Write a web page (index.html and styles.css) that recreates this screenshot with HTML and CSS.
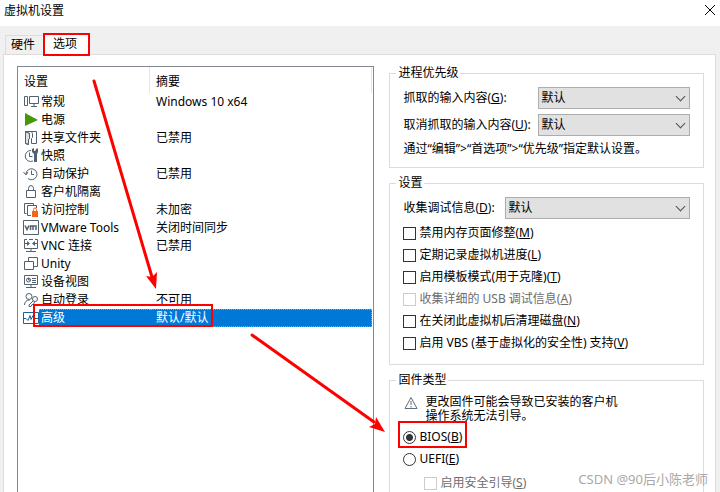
FILE: index.html
```
<!DOCTYPE html>
<html lang="zh-CN">
<head>
  <meta charset="UTF-8">
  <meta name="viewport" content="width=device-width, initial-scale=1.0">
  <title>虚拟机设置</title>
  <link rel="stylesheet" href="styles.css">
</head>
<body>

  <header class="titlebar">
    <span>虚拟机设置</span>
    <button class="close" aria-label="关闭">
      <svg width="12" height="12" viewBox="0 0 12 12"><path d="M1 1l10 10M11 1L1 11" stroke="#000" fill="none"/></svg>
    </button>
  </header>

  <nav class="tabs">
    <button class="tab">硬件</button>
    <button class="tab active">选项</button>
  </nav>

  <main class="panel">

    <!-- Options list -->
    <section class="list">
      <table>
        <colgroup>
          <col class="col-icon">
          <col class="col-name">
          <col>
        </colgroup>
        <thead>
          <tr><th colspan="2">设置</th><th>摘要</th></tr>
        </thead>
        <tbody>
          <tr>
            <td class="icon"><svg class="ico" viewBox="0 0 16 16"><path d="M1.5 2.500h3v9h-3zM6.500 2.500h9v7h-9zM11 9.500v3M8 12.500h6"/></svg></td>
            <td>常规</td><td>Windows 10 x64</td>
          </tr>
          <tr>
            <td class="icon"><svg class="ico" viewBox="0 0 16 16"><path class="play" d="M2 1l13 7-13 6z"/></svg></td>
            <td>电源</td><td></td>
          </tr>
          <tr>
            <td class="icon"><svg class="ico" viewBox="0 0 16 16"><path class="shade" d="M2.500 1.500l4 2v5l-1 1v5l-3-1z"/><path d="M2.500 1.500h11v12h-5v-5l1-1v-4l-1-2M2.500 1.500l4 2v5l-1 1v5l-3-1z"/></svg></td>
            <td>共享文件夹</td><td>已禁用</td>
          </tr>
          <tr>
            <td class="icon"><svg class="ico" viewBox="0 0 16 16"><path d="M8 2.500a5.500 5.500 0 1 0 2 10.500M6.500 4.500v4h3"/><path class="solid" d="M9 1l2-1v3h1l2-3 1 1v3l-1 2v8h-3V6L9 4z"/></svg></td>
            <td>快照</td><td></td>
          </tr>
          <tr>
            <td class="icon"><svg class="ico" viewBox="0 0 16 16"><path d="M3 8a5.500 5.500 0 1 1 2 4.500M.5 6l2.500 3 2-3M8.500 4.500v4H11"/></svg></td>
            <td>自动保护</td><td>已禁用</td>
          </tr>
          <tr>
            <td class="icon"><svg class="ico" viewBox="0 0 16 16"><path d="M3.500 6.500h9v7h-9zM5.500 6V4.500a2.500 3 0 0 1 5 0V6"/></svg></td>
            <td>客户机隔离</td><td></td>
          </tr>
          <tr>
            <td class="icon"><svg class="ico" viewBox="0 0 16 16"><path d="M3.500 11.500h-2v-10h9v2M8 13.500H4.500v-10h9V6"/><path class="lock" d="M9 9h6v6H9z"/><path class="lock-ring" d="M10.500 9V7.500a1.500 1.500 0 0 1 3 0V9"/></svg></td>
            <td>访问控制</td><td>未加密</td>
          </tr>
          <tr>
            <td class="icon"><svg class="ico" viewBox="0 0 16 16"><path d="M.5 .5h15v14H.5z"/><path class="bold" d="M2 5.500l2 4 2-4M7.500 10V6h2.500V10M10 6h3V10"/></svg></td>
            <td>VMware Tools</td><td>关闭时间同步</td>
          </tr>
          <tr>
            <td class="icon"><svg class="ico" viewBox="0 0 16 16"><path d="M4 1.500H1.500v9h13v-9H12M6 1.500h4M8 10.500v3M3 13.500h10M1 5.500h4M11 5.500h4"/><path class="solid" d="M4 3l3 2.500L4 8zM12 3L9 5.500 12 8z"/></svg></td>
            <td>VNC 连接</td><td>已禁用</td>
          </tr>
          <tr>
            <td class="icon"><svg class="ico" viewBox="0 0 16 16"><path d="M5.500 5V1.500h9v9H11M1.500 5.500h9v8h-9z"/></svg></td>
            <td>Unity</td><td></td>
          </tr>
          <tr>
            <td class="icon"><svg class="ico" viewBox="0 0 16 16"><path d="M1.500 1.500h13v9h-13zM8 10.500v3M3 13.500h10M9 4.500h4M9 6.500h4M9 8.500h4"/><circle cx="5.500" cy="6" r="2"/><path d="M5.500 4v2h2"/></svg></td>
            <td>设备视图</td><td></td>
          </tr>
          <tr>
            <td class="icon"><svg class="ico" viewBox="0 0 16 16"><circle cx="6" cy="4.500" r="3"/><path d="M1.500 13c0-3 2-5 5-5"/><circle cx="12" cy="7" r="2.500"/><path d="M10 9l-4 4v1.500h2l1-2h1.500l1-2.500"/></svg></td>
            <td>自动登录</td><td>不可用</td>
          </tr>
          <tr class="selected">
            <td class="icon"><svg class="ico" viewBox="0 0 16 16"><path class="blue" d="M.5 2.500h15v11H.5zM1 8.500h2l2 2 2-5 1 4 2-4 1 3h4"/></svg></td>
            <td>高级</td><td>默认/默认</td>
          </tr>
        </tbody>
      </table>
    </section>

    <!-- Advanced settings -->
    <section class="details">
      <fieldset>
        <legend>进程优先级</legend>
        <div class="field wide">
          <label for="grab">抓取的输入内容(<u>G</u>):</label>
          <div class="dropdown"><select id="grab"><option>默认</option></select></div>
        </div>
        <div class="field wide">
          <label for="ungrab">取消抓取的输入内容(<u>U</u>):</label>
          <div class="dropdown"><select id="ungrab"><option>默认</option></select></div>
        </div>
        <p class="hint">通过“编辑”&gt;“首选项”&gt;“优先级”指定默认设置。</p>
      </fieldset>

      <fieldset>
        <legend>设置</legend>
        <div class="field">
          <label for="debug">收集调试信息(<u>D</u>):</label>
          <div class="dropdown"><select id="debug"><option>默认</option></select></div>
        </div>
        <div class="checks">
          <label class="check"><input type="checkbox"><span>禁用内存页面修整(<u>M</u>)</span></label>
          <label class="check"><input type="checkbox"><span>定期记录虚拟机进度(<u>L</u>)</span></label>
          <label class="check"><input type="checkbox"><span>启用模板模式(用于克隆)(<u>T</u>)</span></label>
          <label class="check off"><input type="checkbox" disabled><span>收集详细的 USB 调试信息(<u>A</u>)</span></label>
          <label class="check"><input type="checkbox"><span>在关闭此虚拟机后清理磁盘(<u>N</u>)</span></label>
          <label class="check"><input type="checkbox"><span>启用 VBS (基于虚拟化的安全性) 支持(<u>V</u>)</span></label>
        </div>
      </fieldset>

      <fieldset>
        <legend>固件类型</legend>
        <div class="warning">
          <svg width="16" height="16" viewBox="0 0 16 16"><path d="M8 2.500l6 11H2z" fill="none" stroke="#5f6f7b"/><path d="M8 6v4M8 11v1.500" stroke="#5f6f7b"/></svg>
          <p>更改固件可能会导致已安装的客户机<br>操作系统无法引导。</p>
        </div>
        <label class="check"><input type="radio" name="firmware" checked><span>BIOS(<u>B</u>)</span></label>
        <label class="check"><input type="radio" name="firmware"><span>UEFI(<u>E</u>)</span></label>
        <label class="check off nested"><input type="checkbox" disabled><span>启用安全引导(<u>S</u>)</span></label>
      </fieldset>
    </section>

  </main>

  <!-- Step marks drawn over the dialog -->
  <svg class="marks" width="720" height="492" viewBox="0 0 720 492">
    <rect x="44" y="34" width="45" height="21"/>
    <rect x="34" y="305" width="178" height="21"/>
    <rect x="399" y="422" width="67" height="25"/>
    <path class="line" d="M94 81l58 196M252 335l122 87"/>
    <path class="head" d="M156 289l-10-13 6 1 5-5zM385 432l-16-5 6-3 1-7z"/>
  </svg>

  <div class="watermark">CSDN @90后小陈老师</div>

</body>
</html>
```
FILE: styles.css
```
* {
  box-sizing: border-box;
}
body {
  margin: 0;
  height: 100vh;
  overflow: hidden;
  position: relative;
  display: flex;
  flex-direction: column;
  background: #f0f0f0;
  color: #000;
  font: 12px/18px "Noto Sans", "Noto Sans CJK SC", sans-serif;
}
button, select {
  font: inherit;
  color: inherit;
}
p {
  margin: 0;
}

.titlebar {
  display: flex;
  justify-content: space-between;
  height: 26px;
  padding: 2px 4px;
  background: #fff;
  flex: none;
}
.close {
  display: flex;
  align-items: center;
  height: 16px;
  padding: 0;
  border: none;
  background: none;
}

.tabs {
  display: flex;
  align-items: flex-end;
  height: 28px;
  padding-left: 5px;
  flex: none;
}
.tab {
  height: 19px;
  padding: 0 8px 0 5px;
  border: 1px solid #dcdcdc;
  border-bottom: none;
  background: #f0f0f0;
}
.tab.active {
  height: 22px;
  margin-bottom: -1px;
  padding: 0 12px 2px 8px;
  background: #fff;
  z-index: 1;
}

.panel {
  display: flex;
  gap: 15px;
  flex: 1;
  min-height: 0;
  margin: 0 4px 0 3px;
  padding: 0 11px 0 13px;
  border: 1px solid #dcdcdc;
  border-bottom: none;
  background: #fff;
}
.list {
  flex: 355;
  margin-top: 11px;
  padding-right: 1px;
  border: 1px solid #828790;
  border-bottom: none;
}
.details {
  flex: 315;
  display: flex;
  flex-direction: column;
  gap: 6px;
  padding-top: 9px;
  min-width: 0;
}

table {
  width: 100%;
  table-layout: fixed;
  border-spacing: 0;
}
.col-icon {
  width: 21px;
}
.col-name {
  width: 111px;
}
th {
  height: 26px;
  padding: 3px 6px 0;
  font-weight: normal;
  text-align: left;
  border-right: 1px solid #e5e5e5;
}
td {
  height: 18px;
  padding: 0 6px;
  line-height: 16px;
  white-space: nowrap;
}
td.icon {
  padding: 0 0 0 5px;
}
td.icon + td {
  padding-left: 2px;
}
.selected td:not(.icon) {
  background: #0078d7;
  color: #fff;
  border-top: 1px dotted #ff8728;
  border-bottom: 1px dotted #ff8728;
}
.selected td:last-child {
  border-right: 1px dotted #ff8728;
}
.ico {
  display: block;
  width: 16px;
  height: 16px;
  fill: none;
  stroke: #52616d;
}
.ico .play {
  fill: #48970b;
  stroke: none;
}
.ico .shade {
  fill: #dde1e4;
}
.ico .solid {
  fill: #52616d;
  stroke: none;
}
.ico .bold {
  stroke-width: 1.5;
}
.ico .lock {
  fill: #f26522;
  stroke: none;
}
.ico .lock-ring {
  stroke: #f26522;
}
.ico .blue {
  stroke: #1b6296;
}

fieldset {
  min-width: 0;
  margin: 0;
  padding: 5px 13px 10px;
  border: 1px solid #dcdcdc;
}
legend {
  margin-left: -7px;
  padding: 0 2px;
}
.field {
  display: grid;
  grid-template-columns: 102px 1fr;
  align-items: center;
}
.field.wide {
  grid-template-columns: 135px 1fr;
  margin-bottom: 5px;
}
.field label {
  white-space: nowrap;
}
.dropdown {
  position: relative;
}
.dropdown::after {
  content: "";
  position: absolute;
  right: 6px;
  top: 6px;
  width: 6px;
  height: 6px;
  border: solid #505050;
  border-width: 0 1px 1px 0;
  transform: rotate(45deg);
  pointer-events: none;
}
select {
  display: block;
  width: 100%;
  height: 22px;
  padding: 0;
  border: 1px solid #adadad;
  border-radius: 0;
  background: #e1e1e1;
  appearance: none;
  text-indent: 2px;
}
.hint {
  line-height: 16px;
}
.checks {
  padding-top: 3px;
}
.check {
  display: flex;
  align-items: center;
  gap: 3px;
  height: 22px;
}
.check.off {
  color: #6d6d6d;
}
.check.nested {
  margin: 2px 0 0 21px;
}
.check input {
  appearance: none;
  width: 13px;
  height: 13px;
  margin: 0;
  border: 1px solid #333;
  background: #fff;
}
.check input[type="radio"] {
  border-radius: 50%;
}
.check input[type="radio"]:checked {
  background: radial-gradient(circle, #333 3px, #fff 4px);
}
.check input:disabled {
  border-color: #ccc;
}
.warning {
  display: flex;
  gap: 6px;
  padding: 1px 0 3px;
  line-height: 14px;
}

.marks {
  position: absolute;
  top: 0;
  left: 0;
  fill: none;
  stroke: #f00;
  stroke-width: 2;
  pointer-events: none;
  z-index: 2;
}
.marks .line {
  stroke-width: 3;
  stroke-linecap: round;
}
.marks .head {
  fill: #f00;
  stroke: none;
}
.watermark {
  position: absolute;
  right: 12px;
  bottom: 4px;
  font-size: 13px;
  color: #a9a9a9;
  z-index: 3;
}
```
